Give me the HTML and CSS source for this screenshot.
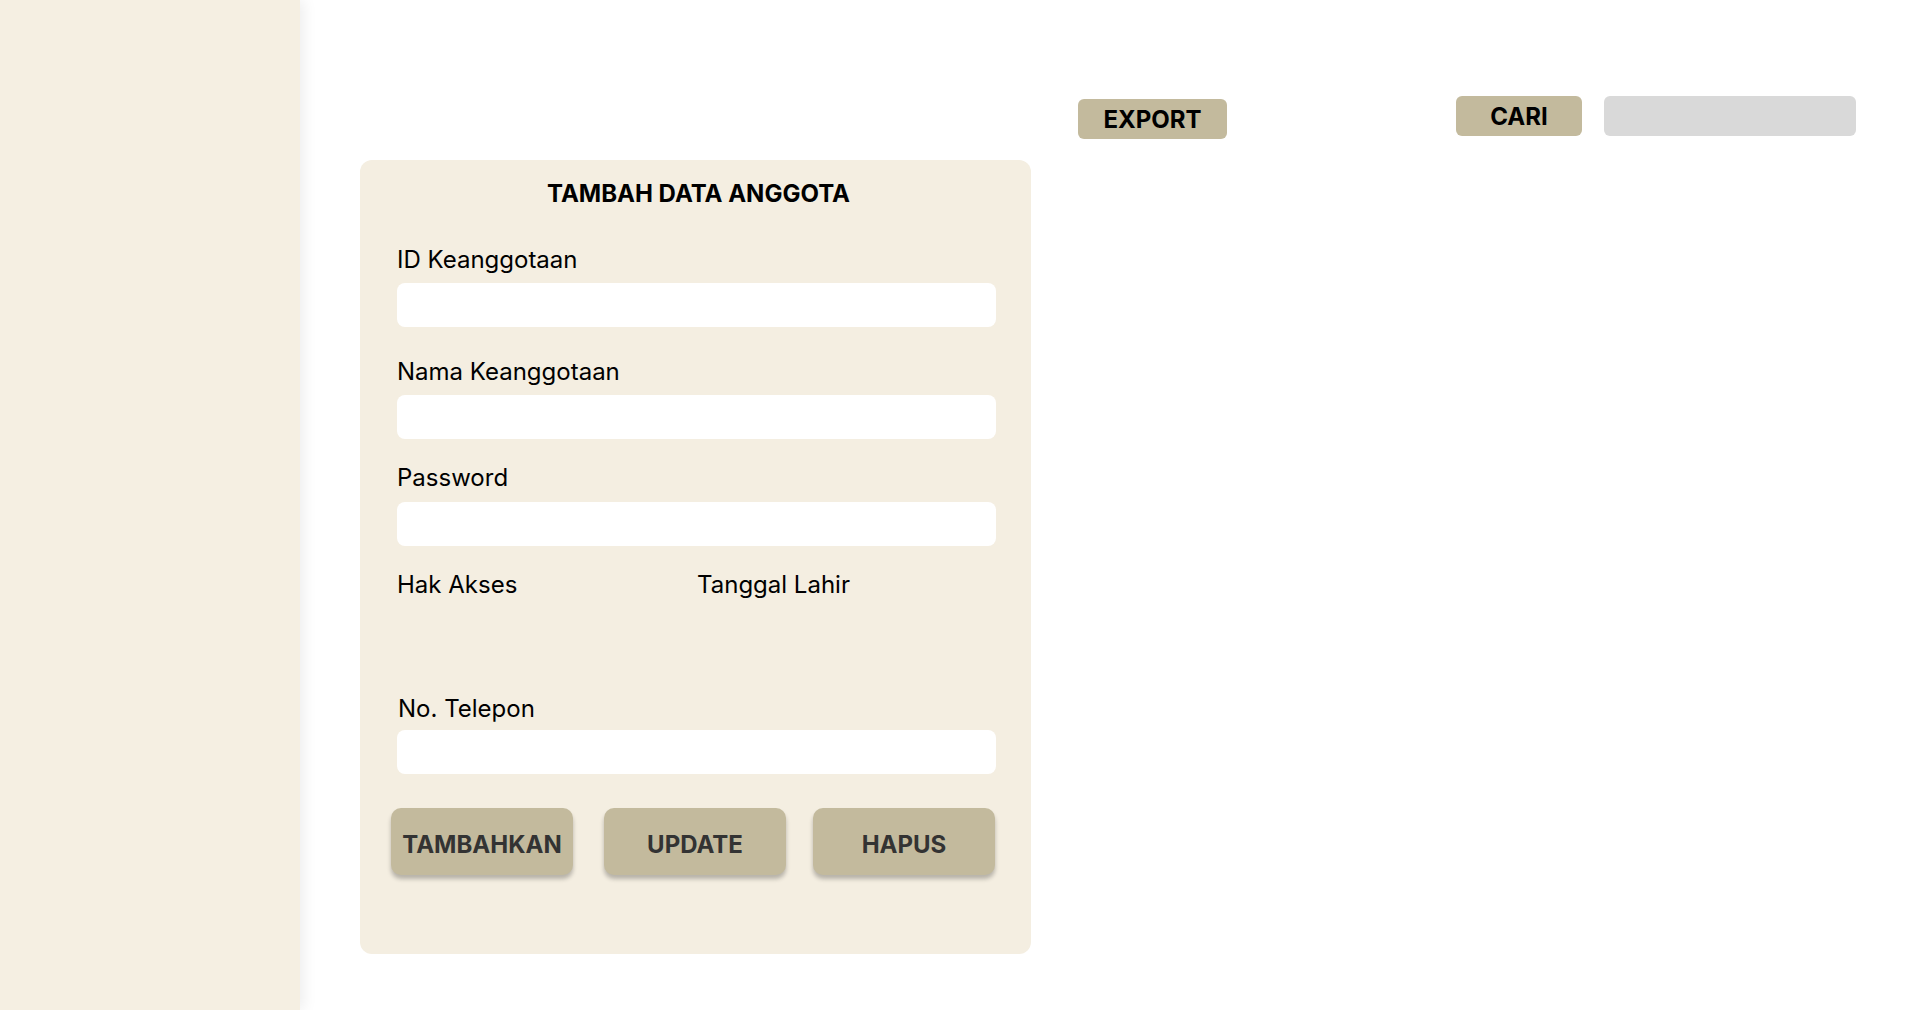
FILE: index.html
```html
<!DOCTYPE html>
<html lang="id">
<head>
<meta charset="utf-8">
<title>Tambah Data Anggota</title>
<link rel="stylesheet" href="styles.css">
</head>
<body>
<div class="layout">
  <aside class="sidebar"></aside>
  <main class="main">
    <div class="toolbar">
      <button class="tool-btn export-btn">EXPORT</button>
      <button class="tool-btn cari-btn">CARI</button>
      <input class="search" type="text" aria-label="Cari">
    </div>
    <section class="card">
      <h1 class="card-title">TAMBAH DATA ANGGOTA</h1>
      <div class="field field-first">
        <label class="label">ID Keanggotaan</label>
        <input class="input" type="text">
      </div>
      <div class="field field-name">
        <label class="label">Nama Keanggotaan</label>
        <input class="input" type="text">
      </div>
      <div class="field field-pass">
        <label class="label">Password</label>
        <input class="input" type="password">
      </div>
      <div class="field-row">
        <label class="label">Hak Akses</label>
        <label class="label">Tanggal Lahir</label>
      </div>
      <div class="field field-tel">
        <label class="label label-tel">No. Telepon</label>
        <input class="input" type="text">
      </div>
      <div class="actions">
        <button class="action-btn">TAMBAHKAN</button>
        <button class="action-btn action-update">UPDATE</button>
        <button class="action-btn action-delete">HAPUS</button>
      </div>
    </section>
  </main>
</div>
</body>
</html>
```
FILE: styles.css
```css
* { box-sizing: border-box; }

html, body {
  margin: 0;
  padding: 0;
  height: 1010px;
  overflow: hidden;
  background: #ffffff;
  font-family: "Inter", "Noto Sans", sans-serif;
  color: #000000;
}

.layout {
  display: flex;
  height: 1010px;
}

.sidebar {
  width: 300px;
  flex: 0 0 300px;
  height: 100%;
  background: #F5EFE2;
  box-shadow: 3px 0 14px rgba(0, 0, 0, 0.08);
  position: relative;
  z-index: 1;
}

.main {
  flex: 1;
  padding-top: 96px;
}

.toolbar {
  display: flex;
  align-items: flex-start;
  height: 43px;
}

.tool-btn {
  border: none;
  background: #C3BA9D;
  border-radius: 6px;
  height: 40px;
  font-family: "Inter", sans-serif;
  font-weight: 700;
  font-size: 24px;
  color: #000000;
  padding: 1px 0 0;
  cursor: pointer;
}

.export-btn {
  width: 149px;
  margin-left: 778px;
  margin-top: 3px;
}

.cari-btn {
  width: 126px;
  margin-left: 229px;
}

.search {
  width: 252px;
  height: 40px;
  margin-left: 22px;
  border: none;
  border-radius: 6px;
  background: #D9D9D9;
}

.card {
  margin-top: 21px;
  margin-left: 60px;
  width: 671px;
  height: 794px;
  background: #F4EEE1;
  border-radius: 12px;
  padding: 19px 35px 0 37px;
}

.card-title {
  margin: 0;
  font-size: 24px;
  line-height: 29px;
  font-weight: 700;
  text-align: center;
  padding-left: 4px;
}

.field {
  display: flex;
  flex-direction: column;
}

.field-first { margin-top: 37px; }
.field-name { margin-top: 30px; }
.field-pass { margin-top: 24px; }
.field-tel { margin-top: 24px; }

.label {
  font-size: 24px;
  line-height: 29px;
  font-weight: 400;
  margin-bottom: 9px;
}

.field-pass .label { margin-bottom: 10px; }
.label-tel { margin-bottom: 7px; padding-left: 1px; }

.input {
  width: 599px;
  height: 44px;
  border: none;
  border-radius: 8px;
  background: #ffffff;
}

.field-row {
  display: grid;
  grid-template-columns: 300px 300px;
  height: 100px;
  margin-top: 24px;
}

.field-row .label { margin: 0; }

.actions {
  display: flex;
  margin-left: -6px;
  margin-top: 34px;
}

.action-update { margin-left: 31px; }
.action-delete { margin-left: 27px; }

.action-btn {
  width: 182px;
  height: 67px;
  border: none;
  border-radius: 10px;
  background: #C3BA9D;
  box-shadow: 0 4px 4px rgba(0, 0, 0, 0.25);
  font-family: "Inter", sans-serif;
  font-weight: 700;
  font-size: 24px;
  color: #333333;
  padding: 5px 0 0;
  cursor: pointer;
}
```
